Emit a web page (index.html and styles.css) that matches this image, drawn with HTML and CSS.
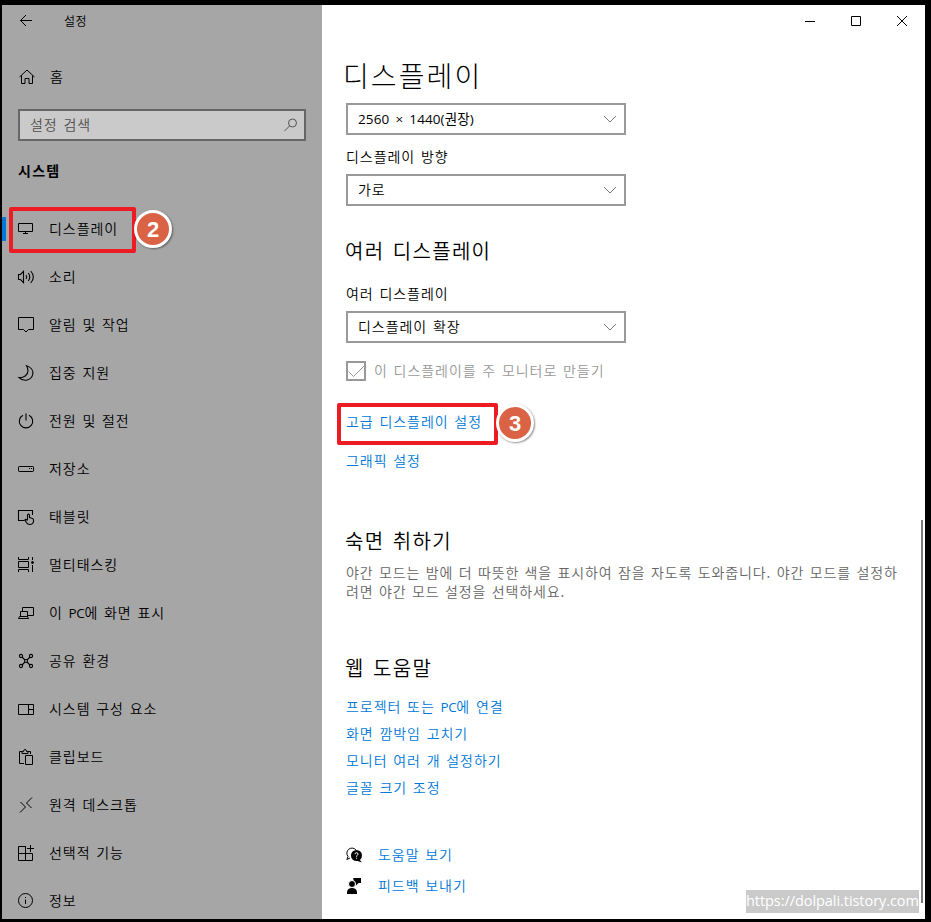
FILE: index.html
```
<!DOCTYPE html>
<html lang="ko">
  <head>
    <meta charset="UTF-8" />
    <meta name="viewport" content="width=device-width, initial-scale=1.0" />
    <title>설정</title>
    <link rel="stylesheet" href="styles.css">
  </head>
  <body>
    <div class="window">
      <aside class="sidebar">
        <div class="app-bar">
          <svg class="icon" viewBox="0 0 16 16"><path d="M14 7.5H2.5M8 2L2.5 7.5L8 13" /></svg>
          <span class="app-title">설정</span>
        </div>
        <a class="home">
          <svg class="icon" viewBox="0 0 16 16"><path d="M1.5 8L9 1L16.5 8M3.5 6.5V14.500H7V9.500H11V14.500H14.500V6.500" /></svg>
          <span>홈</span>
        </a>
        <div class="search">
          <span>설정 검색</span>
          <svg class="icon" viewBox="0 0 16 16"><circle cx="10.500" cy="6" r="4" /><path d="M7.500 9L2.500 14" /></svg>
        </div>
        <h2 class="group-title">시스템</h2>

        <nav class="menu">
          <a class="item active">
            <svg class="icon" viewBox="0 0 16 16"><path d="M.5 2.500H14.500V10.500H.5ZM7.500 10.500V12.500M5 12.500H10" /></svg>
            <span>디스플레이</span>
            <i class="mark mark-menu"></i>
            <b class="badge badge-menu">2</b>
          </a>
          <a class="item">
            <svg class="icon curved" viewBox="0 0 16 16"><path d="M.5 5.500H2.500L5.500 2.300V13.700L2.500 10.500H.5ZM8 6Q9.500 8 8 10M10.300 4Q13.200 8 10.300 12M12.700 2Q18 8 12.700 14" /></svg>
            <span>소리</span>
          </a>
          <a class="item">
            <svg class="icon" viewBox="0 0 16 16"><path d="M.5 .5H15.500V12.500H10.500L8 15L5.500 12.500H.5Z" /></svg>
            <span>알림 및 작업</span>
          </a>
          <a class="item">
            <svg class="icon curved" viewBox="0 0 16 16"><path d="M8.500 .7C13 2 15.500 5.500 14.700 9.500C13.500 15 6 17.500 1 12.500C5.500 13 10 10 10 6Q10 3 8.500 .7Z" /></svg>
            <span>집중 지원</span>
          </a>
          <a class="item">
            <svg class="icon curved" viewBox="0 0 16 16"><path d="M8 .5V7.500M5 2.200A6.700 6.700 0 1 0 11 2.200" /></svg>
            <span>전원 및 절전</span>
          </a>
          <a class="item">
            <svg class="icon" viewBox="0 0 16 16"><rect x=".5" y="5.500" width="15" height="5" rx=".7" /><path d="M11 7.500H12M13 7.500H14" /></svg>
            <span>저장소</span>
          </a>
          <a class="item">
            <svg class="icon curved" viewBox="0 0 16 16"><path d="M6.500 11.500H.5V1.500H14.500V6M9.500 11V6Q10.500 4 11.500 6V8.500L14 9.200Q15.500 9.500 15.500 11V12.500Q15 15.500 12 15.500Q9.500 15.500 8.300 13.500L7 11Q7.500 9.500 9.500 11.500" /></svg>
            <span>태블릿</span>
          </a>
          <a class="item">
            <svg class="icon" viewBox="0 0 16 16"><path d="M.5 0V2.500H10.500V0M.5 15V12.500H10.500V15M.5 4.500H10.500V10.500H.5ZM14.500 0V3M14.500 8V15" /><circle cx="14.500" cy="5.500" r="1" class="fill" /></svg>
            <span>멀티태스킹</span>
          </a>
          <a class="item">
            <svg class="icon" viewBox="0 0 16 16"><path d="M4.500 6V2.500H15.500V10.500H10M2.500 6.500H9.500V11.500H2.500ZM.5 13.500L1.500 11.500H9.500L10.500 13.500Z" /></svg>
            <span>이 <span class="latin">PC</span>에 화면 표시</span>
          </a>
          <a class="item">
            <svg class="icon curved" viewBox="0 0 16 16"><circle cx="3" cy="3" r="1.600" /><circle cx="13" cy="3" r="1.600" /><circle cx="3" cy="13" r="1.600" /><circle cx="13" cy="13" r="1.600" /><circle cx="8" cy="8" r="1.500" /><path d="M4 4L7 7M12 4L9 7M4 12L7 9M12 12L9 9" /></svg>
            <span>공유 환경</span>
          </a>
          <a class="item">
            <svg class="icon" viewBox="0 0 16 16"><path d="M.5 3.500H15.500V13.500H.5ZM10.500 3.500V13.500M10.500 8.500H15.500" /></svg>
            <span>시스템 구성 요소</span>
          </a>
          <a class="item">
            <svg class="icon" viewBox="0 0 16 16"><path d="M6 14.500H1.500V2.500H4M10 2.500H12.500V5M4 4.500V2.500H5.500Q5.500 .5 7 .5T8.500 2.500H10V4.500ZM7.500 6.500H14.500V15.500H7.500Z" /></svg>
            <span>클립보드</span>
          </a>
          <a class="item">
            <svg class="icon" viewBox="0 0 16 16"><path d="M2.500 5L7.500 10L2 15.500M14 .5L8.500 6L13.500 11" /></svg>
            <span>원격 데스크톱</span>
          </a>
          <a class="item">
            <svg class="icon" viewBox="0 0 16 16"><path d="M8 1.500H.5V15.500H14.500V8.500H.5M7.500 1.500V15.500M12.500 0V7M9 3.500H16" /></svg>
            <span>선택적 기능</span>
          </a>
          <a class="item">
            <svg class="icon" viewBox="0 0 16 16"><circle cx="7.500" cy="7.500" r="7" /><path d="M7.500 6.500V11M7.500 4V5" /></svg>
            <span>정보</span>
          </a>
        </nav>
      </aside>

      <main class="content">
        <div class="controls">
          <svg class="control" viewBox="0 0 12 12"><path d="M1 6.500H11" /></svg>
          <svg class="control" viewBox="0 0 12 12"><path d="M1.500 1.500H10.500V10.500H1.500Z" /></svg>
          <svg class="control" viewBox="0 0 12 12"><path d="M1 1L11 11M11 1L1 11" /></svg>
        </div>

        <h1 class="title">디스플레이</h1>
        <div class="select">
          <span class="resolution">2560 × 1440(권장)</span>
          <svg class="arrow" viewBox="0 0 12 12"><path d="M0 3L6 9L12 3" /></svg>
        </div>
        <div class="label">디스플레이 방향</div>
        <div class="select">
          <span>가로</span>
          <svg class="arrow" viewBox="0 0 12 12"><path d="M0 3L6 9L12 3" /></svg>
        </div>

        <h2 class="heading heading-multi">여러 디스플레이</h2>
        <div class="label label-multi">여러 디스플레이</div>
        <div class="select">
          <span>디스플레이 확장</span>
          <svg class="arrow" viewBox="0 0 12 12"><path d="M0 3L6 9L12 3" /></svg>
        </div>
        <div class="check">
          <svg class="check-box" viewBox="0 0 20 20"><path class="frame" d="M1 1H19V19H1Z" /><path d="M2.500 10.500L7.500 15.500L18 5" /></svg>
          <span>이 디스플레이를 주 모니터로 만들기</span>
        </div>
        <a class="link link-advanced">고급 디스플레이 설정
          <i class="mark mark-link"></i>
          <b class="badge badge-link">3</b>
        </a>
        <a class="link link-graphics">그래픽 설정</a>

        <h2 class="heading heading-sleep">숙면 취하기</h2>
        <p class="text">야간 모드는 밤에 더 따뜻한 색을 표시하여 잠을 자도록 도와줍니다. 야간 모드를 설정하<br>려면 야간 모드 설정을 선택하세요.</p>

        <h2 class="heading heading-help">웹 도움말</h2>
        <div class="links">
          <a class="link">프로젝터 또는 <span class="latin">PC</span>에 연결</a>
          <a class="link">화면 깜박임 고치기</a>
          <a class="link">모니터 여러 개 설정하기</a>
          <a class="link">글꼴 크기 조정</a>
        </div>

        <div class="support">
          <a class="support-row">
            <svg class="support-icon" viewBox="0 0 16 16"><path class="line" d="M.8 12.500L2 9.500A5 5 0 1 1 10 3M.8 12.500L4 11" /><circle cx="10.500" cy="8.500" r="5.500" /><path d="M13 12L16 15.500L10 13.500Z" /><path class="question" d="M9 7.200Q9 5.700 10.500 5.700T12 7.200Q12 8 10.600 8.800V9.700M10.600 10.700V11.700" /></svg>
            <span>도움말 보기</span>
          </a>
          <a class="support-row">
            <svg class="support-icon" viewBox="0 0 16 16"><path d="M7 0H15V5H12.500L10 7.500V5H8.500Z" /><circle cx="6" cy="6" r="3.500" class="head" /><path d="M1 16V14Q1.500 10 6 10T11 14V16Z" /></svg>
            <span>피드백 보내기</span>
          </a>
        </div>

        <div class="scrollbar"></div>
        <div class="watermark">https://dolpali.tistory.com</div>
      </main>
    </div>
  </body>
</html>
```
FILE: styles.css
```
* {
  box-sizing: border-box;
}

body {
  margin: 0;
  height: 922px;
  padding: 5px 6px 3px 2px;
  overflow: hidden;
  background-color: #000;
  font-family: "Noto Sans CJK KR", sans-serif;
  font-size: 14px;
  font-weight: 350;
  line-height: 20px;
  letter-spacing: 0.95px;
  word-spacing: 0.9px;
  color: #000;
}

h1,
h2,
p {
  margin: 0;
}

.window {
  display: flex;
  height: 914px;
}

.latin {
  font-family: "Open Sans", sans-serif;
  font-size: 13.5px;
  font-weight: 400;
  line-height: 1;
  letter-spacing: -0.4px;
}

/* left side */
.sidebar {
  position: relative;
  width: 320px;
  height: 914px;
  overflow: hidden;
  background-color: #a6a6a6;
}

.icon {
  flex: none;
  width: 16px;
  height: 16px;
  overflow: visible;
  fill: none;
  stroke: #000;
  stroke-width: 1;
}

.icon .fill {
  fill: #000;
}

.curved {
  stroke-width: 1.1;
}

.app-bar {
  display: flex;
  align-items: center;
  gap: 30px;
  height: 32px;
  padding-left: 16px;
}

.app-title {
  font-size: 12px;
  letter-spacing: 0.4px;
}

.home {
  display: flex;
  align-items: center;
  gap: 16px;
  height: 48px;
  margin-top: 16px;
  padding-left: 16px;
}

.home span,
.item > span,
.check span,
.select span,
.support-row span {
  padding-bottom: 2px;
}

.search {
  display: flex;
  align-items: center;
  justify-content: space-between;
  width: 288px;
  height: 32px;
  margin: 8px 16px 0;
  padding: 0 6px 0 10px;
  border: 2px solid #666;
  background-color: #cacaca;
  color: #505050;
}

.search span {
  padding-bottom: 3px;
}

.search .icon {
  stroke: #555;
}

.group-title {
  margin: 19px 0 25px 16px;
  font-size: 14px;
  font-weight: 700;
  line-height: 20px;
  letter-spacing: 1.3px;
}

.item {
  position: relative;
  display: flex;
  align-items: center;
  gap: 15px;
  height: 48px;
  padding-left: 16px;
}

.active::before {
  content: "";
  position: absolute;
  left: 0;
  top: 12px;
  width: 4px;
  height: 24px;
  background-color: #0078d7;
}

/* red boxes and step numbers */
.mark {
  position: absolute;
  border: 4px solid #ed1c24;
  border-radius: 2px;
}

.mark-menu {
  left: 7px;
  top: 2px;
  width: 127px;
  height: 46px;
}

.mark-link {
  left: -9px;
  top: -8px;
  width: 161px;
  height: 42px;
}

.badge {
  position: absolute;
  width: 38px;
  height: 38px;
  border: 3px solid #fff;
  border-radius: 50%;
  background-color: #d96344;
  box-shadow: 1px 1px 2px rgba(0, 0, 0, 0.45);
  color: #fff;
  font: bold 22px/33px "Liberation Sans", sans-serif;
  letter-spacing: 0;
  text-align: center;
}

.badge-menu {
  left: 132px;
  top: 5px;
}

.badge-link {
  left: 150px;
  top: -7px;
}

/* right side */
.content {
  position: relative;
  flex: 1;
  padding-left: 24px;
  background-color: #fff;
}

.controls {
  display: flex;
  justify-content: flex-end;
  align-items: center;
  gap: 34px;
  height: 32px;
  padding-right: 17px;
}

.control {
  width: 12px;
  height: 12px;
  fill: none;
  stroke: #000;
}

.title {
  height: 40px;
  margin: 18px 0 8px -3px;
  font-size: 28px;
  font-weight: 300;
  line-height: 40px;
  letter-spacing: 2.1px;
}

.select {
  display: flex;
  align-items: center;
  justify-content: space-between;
  width: 280px;
  height: 32px;
  padding: 0 8px 0 10px;
  border: 2px solid #999;
}

.select .resolution {
  padding-bottom: 0;
  font-family: "Open Sans", "Noto Sans CJK KR", sans-serif;
  font-size: 13.5px;
  font-weight: 400;
  letter-spacing: 0.1px;
  word-spacing: 2.5px;
}

.arrow {
  width: 12px;
  height: 12px;
  fill: none;
  stroke: #777;
}

.label {
  margin: 11px 0 8px;
}

.heading {
  height: 30px;
  margin-left: -1px;
  font-size: 20px;
  font-weight: 350;
  line-height: 30px;
  letter-spacing: 1.3px;
  word-spacing: 1.5px;
}

.heading-multi {
  margin-top: 30px;
}

.label-multi {
  margin-top: 17px;
}

.check {
  display: flex;
  align-items: center;
  gap: 8px;
  height: 20px;
  margin-top: 18px;
  color: #999;
}

.check-box {
  width: 20px;
  height: 20px;
  fill: none;
  stroke: #999;
}

.frame {
  stroke-width: 2;
}

.link {
  position: relative;
  display: block;
  width: max-content;
  color: #0078d7;
}

.link-advanced {
  margin-top: 30px;
}

.link-graphics {
  margin-top: 19px;
}

.heading-sleep {
  margin-top: 56px;
}

.text {
  margin-top: 7px;
  line-height: 19px;
  letter-spacing: 0.88px;
  word-spacing: 0.65px;
  color: #666;
  white-space: nowrap;
}

.heading-help {
  margin-top: 52px;
}

.links {
  display: grid;
  gap: 7px;
  margin-top: 13px;
}

.support {
  display: grid;
  gap: 11px;
  margin-top: 48px;
}

.support-row {
  display: flex;
  align-items: center;
  gap: 16px;
  height: 20px;
  color: #0078d7;
}

.support-icon {
  width: 16px;
  height: 16px;
  fill: #000;
}

.support-icon .line {
  fill: none;
  stroke: #000;
}

.support-icon .question {
  fill: none;
  stroke: #fff;
}

.support-icon .head {
  stroke: #fff;
}

.scrollbar {
  position: absolute;
  right: 2px;
  top: 515px;
  width: 2px;
  height: 383px;
  background-color: #7a7a7a;
}

.watermark {
  position: absolute;
  right: 6px;
  bottom: 6px;
  width: 173px;
  height: 23px;
  background-color: #cacaca;
  color: #fff;
  font-family: "Open Sans", sans-serif;
  font-size: 14.5px;
  font-weight: 400;
  line-height: 22px;
  letter-spacing: -0.06px;
  white-space: nowrap;
}
```
